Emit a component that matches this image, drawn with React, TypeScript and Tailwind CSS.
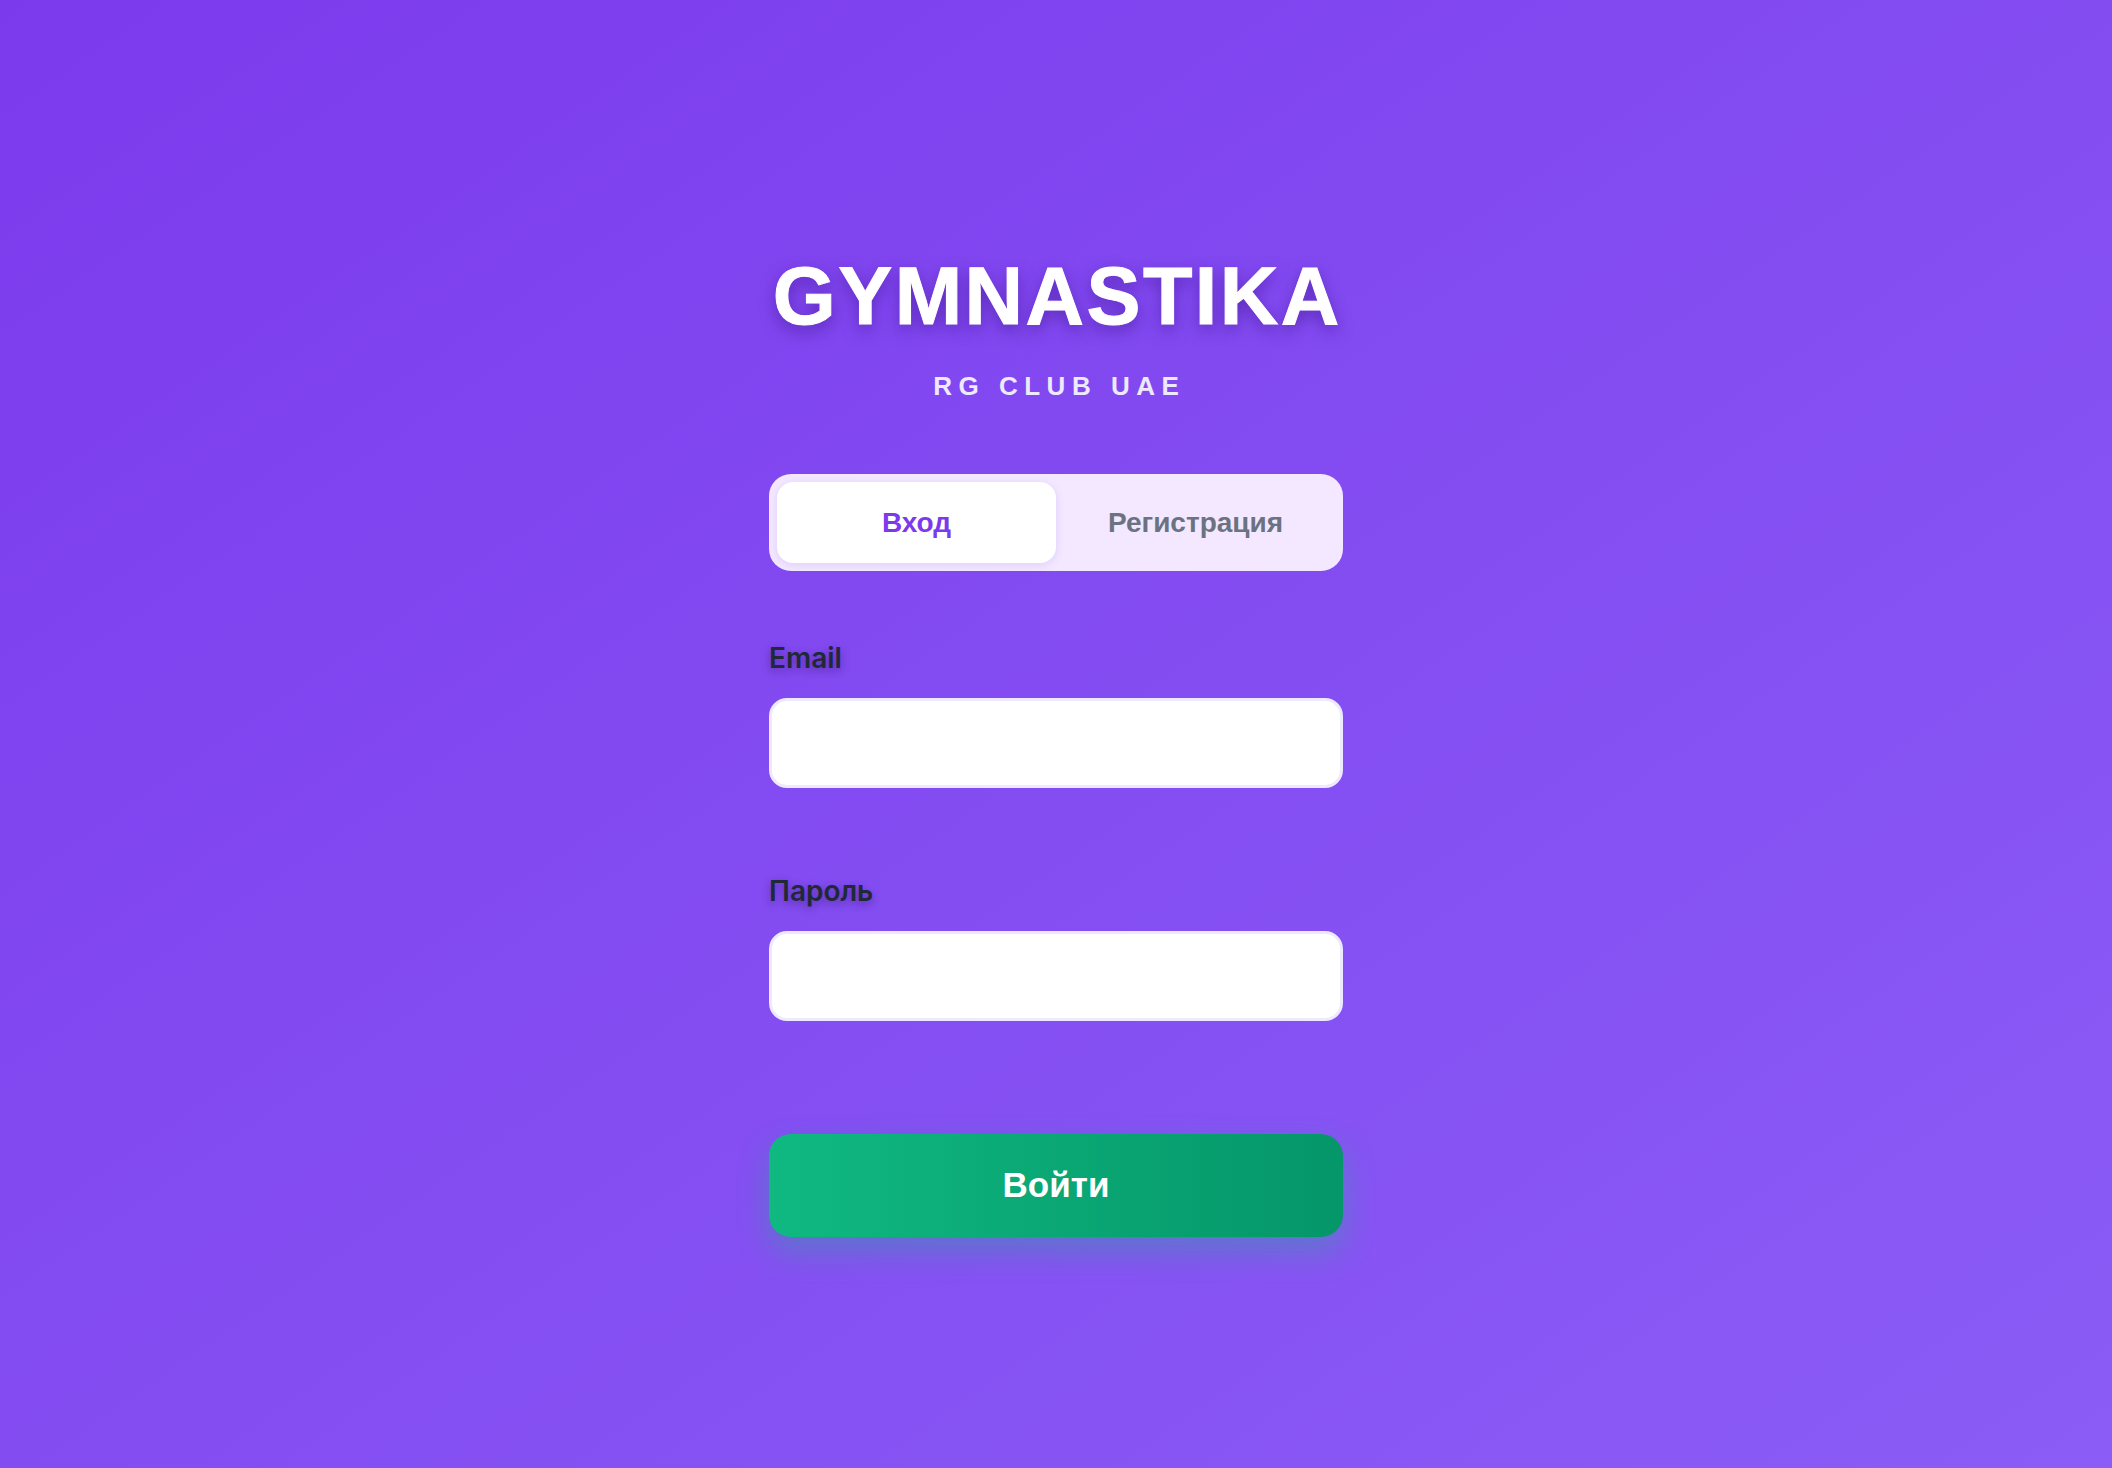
import React, { useState } from 'react';

const App: React.FC = () => {
  const [tab, setTab] = useState<'login' | 'register'>('login');
  const [email, setEmail] = useState('');
  const [password, setPassword] = useState('');

  return (
    <div className="min-h-screen w-full bg-gradient-to-br from-[#7c3aed] to-[#8b5cf6] flex justify-center font-['Liberation_Sans',Arial,sans-serif]">
      <div className="w-[574px] flex flex-col pt-[256px]">
        <h1 className="text-center text-white font-bold text-[81px] leading-none tracking-[0.03em] pl-[0.03em] [-webkit-text-stroke:1px_white] [text-shadow:0_6px_16px_rgba(60,20,140,0.55)]">
          GYMNASTIKA
        </h1>
        <p className="mt-[36px] text-center text-[#ede9fe] font-bold text-[26px] leading-none tracking-[0.25em] pl-[0.25em]">
          RG CLUB UAE
        </p>

        <div className="mt-[75px] h-[97px] bg-[#f3e8ff] rounded-[22px] p-2 flex">
          <button
            onClick={() => setTab('login')}
            className={`flex-1 rounded-[16px] text-[28px] font-bold ${
              tab === 'login' ? 'bg-white text-[#7c3aed] shadow-[0_2px_8px_rgba(124,58,237,0.15)]' : 'text-[#6b7280]'
            }`}
          >
            Вход
          </button>
          <button
            onClick={() => setTab('register')}
            className={`flex-1 rounded-[16px] text-[28px] font-bold ${
              tab === 'register' ? 'bg-white text-[#7c3aed] shadow-[0_2px_8px_rgba(124,58,237,0.15)]' : 'text-[#6b7280]'
            }`}
          >
            Регистрация
          </button>
        </div>

        <label className="mt-[73px] text-[28px] leading-none font-semibold text-[#1f2937] font-['Inter',sans-serif] [text-shadow:0_3px_8px_rgba(40,10,90,0.45)]">
          Email
        </label>
        <input
          type="email"
          value={email}
          onChange={(e) => setEmail(e.target.value)}
          className="mt-[26px] h-[90px] w-full bg-white border-[3px] border-[#ede9fe] rounded-[18px] px-6 text-[28px] outline-none"
        />

        <label className="mt-[89px] text-[28px] leading-none font-semibold text-[#1f2937] font-['Inter',sans-serif] [text-shadow:0_3px_8px_rgba(40,10,90,0.45)]">
          Пароль
        </label>
        <input
          type="password"
          value={password}
          onChange={(e) => setPassword(e.target.value)}
          className="mt-[26px] h-[90px] w-full bg-white border-[3px] border-[#ede9fe] rounded-[18px] px-6 text-[28px] outline-none"
        />

        <button className="mt-[113px] h-[103px] w-full rounded-[22px] bg-gradient-to-r from-[#10b981] to-[#059669] text-white font-bold text-[35px] shadow-[0_14px_30px_rgba(16,185,129,0.35)]">
          Войти
        </button>
      </div>
    </div>
  );
};

export default App;
